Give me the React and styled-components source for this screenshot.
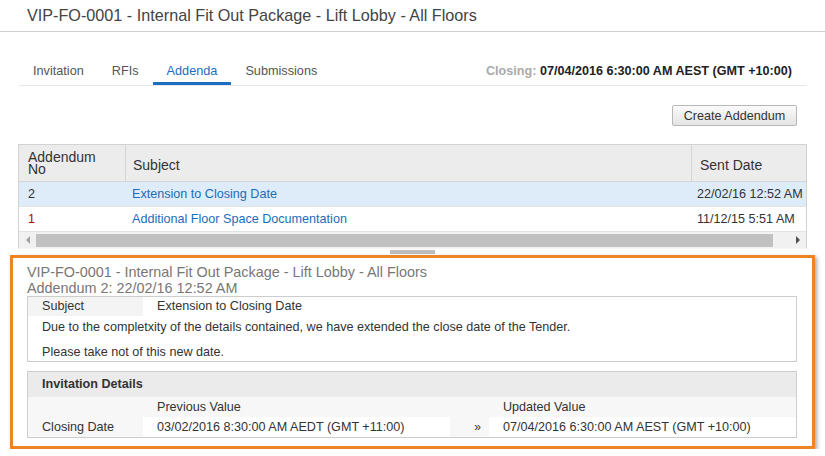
import React from 'react'
import styled, { createGlobalStyle } from 'styled-components'

const GlobalStyle = createGlobalStyle`
  body {
    margin: 0;
    background: #fff;
    font-family: "Liberation Sans", Arial, sans-serif;
    color: #333;
  }
`

const Header = styled.div`
  height: 31px;
  border-bottom: 1px solid #d0d0d0;
  padding: 0 27px;
  display: flex;
  align-items: center;
`

const Title = styled.h1`
  margin: 0;
  font-size: 16.2px;
  font-weight: normal;
  color: #444;
`

const Content = styled.div`
  padding: 0 18px;
`

const TabRow = styled.div`
  margin: 25px 0 0 1px;
  display: flex;
  align-items: flex-end;
  border-bottom: 1px solid #e8e8e8;
`

const Tab = styled.div`
  padding: 6px 14px 3px;
  line-height: 16px;
  font-size: 12.7px;
  color: ${p => (p.$active ? '#1b6ec2' : '#555')};
  border-bottom: 3px solid ${p => (p.$active ? '#1b6ec2' : 'transparent')};
`

const Closing = styled.div`
  margin-left: auto;
  align-self: center;
  margin-right: 15px;
  font-size: 12.6px;
  font-weight: bold;
  color: #222;

  span {
    color: #aaa;
  }
`

const ButtonRow = styled.div`
  display: flex;
  justify-content: flex-end;
  padding-right: 10px;
  margin: 19px 0 18px;
`

const Button = styled.button`
  height: 21px;
  width: 125px;
  padding: 0;
  font-family: inherit;
  font-size: 12.6px;
  color: #333;
  border: 1px solid #b8b8b8;
  border-radius: 2px;
  background: linear-gradient(#fafafa, #e4e4e4);
`

const Table = styled.div`
  border: 1px solid #d2d2d2;
  border-bottom-color: #f4f4f4;
`

const Row = styled.div`
  display: grid;
  grid-template-columns: 106px 1fr 115px;
  height: ${p => (p.$head ? '36px' : '24px')};
  background: ${p => (p.$head ? '#ececec' : p.$selected ? '#deebf8' : '#fff')};
  border-bottom: 1px solid ${p => (p.$head ? '#d5d5d5' : '#e2e2e2')};
  font-size: ${p => (p.$head ? '14px' : '12.6px')};
`

const Cell = styled.div`
  display: flex;
  align-items: center;
  padding-left: ${p => p.$pad || 8}px;
  padding-top: ${p => p.$top || 0}px;
  white-space: nowrap;
  color: ${p => p.$color || '#333'};
  border-left: ${p => (p.$divider ? '1px solid #d4d4d4' : 'none')};
`

const Stack = styled.div`
  line-height: 12px;
`

const Link = styled.span`
  color: #1a6dba;
`

const Scrollbar = styled.div`
  height: 16px;
  background: #f1f1f1;
  display: flex;
  align-items: center;
`

const Arrow = styled.div`
  width: 17px;
  display: flex;
  justify-content: center;

  &::before {
    content: '';
    border-top: 4px solid transparent;
    border-bottom: 4px solid transparent;
    ${p =>
      p.$dir === 'left'
        ? 'border-right: 4px solid #a3a3a3;'
        : 'border-left: 4px solid #505050;'}
  }
`

const Thumb = styled.div`
  flex: 1;
  height: 13px;
  margin-right: 16px;
  background: #c1c1c1;
`

const Splitter = styled.div`
  width: 45px;
  height: 4px;
  margin: 1px auto 1px;
  background: #bdbdbd;
`

const Panel = styled.div`
  margin: 0 -8px;
  border: 3px solid #ef8424;
  box-shadow: 2px 2px 4px rgba(0, 0, 0, 0.35);
  padding: 6px 15px 8px 14px;
`

const PanelTitle = styled.div`
  font-size: 14.4px;
  line-height: 16px;
  color: #777;
`

const Box = styled.div`
  border: 1px solid #cdcdcd;
  margin-top: ${p => p.$gap || 0}px;
  font-size: 12.6px;
`

const SubjectRow = styled.div`
  display: grid;
  grid-template-columns: 115px 1fr;
  height: 19px;
  line-height: 19px;
`

const Label = styled.div`
  padding-left: 14px;
  background: ${p => p.$bg || 'transparent'};
`

const Para = styled.p`
  margin: ${p => p.$top}px 0 0;
  padding: 0 14px ${p => p.$bottom || 0}px;
  line-height: 16px;
`

const BoxHead = styled.div`
  height: 25px;
  line-height: 25px;
  padding-left: 14px;
  background: #ebebeb;
  font-weight: bold;
`

const ChangeGrid = styled.div`
  display: grid;
  grid-template-columns: 115px 307px 39px 1fr;
  grid-auto-rows: 20px;
  background: #f7f7f7;
  line-height: 20px;
`

const Value = styled.div`
  padding-left: 14px;
  background: ${p => (p.$white ? '#fff' : 'transparent')};
`

const Chevron = styled.div`
  text-align: right;
  padding-right: 8px;
  font-size: 12px;
`

const rows = [
  { no: '2', subject: 'Extension to Closing Date', sent: '22/02/16 12:52 AM', selected: true },
  { no: '1', subject: 'Additional Floor Space Documentation', sent: '11/12/15 5:51 AM', red: true },
]

export default function App() {
  return (
    <>
      <GlobalStyle />
      <Header>
        <Title>VIP-FO-0001 - Internal Fit Out Package - Lift Lobby - All Floors</Title>
      </Header>
      <Content>
        <TabRow>
          <Tab>Invitation</Tab>
          <Tab>RFIs</Tab>
          <Tab $active>Addenda</Tab>
          <Tab>Submissions</Tab>
          <Closing>
            <span>Closing:</span> 07/04/2016 6:30:00 AM AEST (GMT +10:00)
          </Closing>
        </TabRow>
        <ButtonRow>
          <Button>Create Addendum</Button>
        </ButtonRow>
        <Table>
          <Row $head>
            <Cell $pad={9}>
              <Stack>
                Addendum
                <br />
                No
              </Stack>
            </Cell>
            <Cell $divider $pad={7} $top={3}>Subject</Cell>
            <Cell $divider $pad={8} $top={3}>Sent Date</Cell>
          </Row>
          {rows.map(r => (
            <Row key={r.no} $selected={r.selected}>
              <Cell $pad={9} $color={r.red ? '#b00000' : '#333'}>{r.no}</Cell>
              <Cell $pad={7}>
                <Link>{r.subject}</Link>
              </Cell>
              <Cell $pad={6}>{r.sent}</Cell>
            </Row>
          ))}
          <Scrollbar>
            <Arrow $dir="left" />
            <Thumb />
            <Arrow $dir="right" />
          </Scrollbar>
        </Table>
        <Splitter />
        <Panel>
          <PanelTitle>VIP-FO-0001 - Internal Fit Out Package - Lift Lobby - All Floors</PanelTitle>
          <PanelTitle>Addendum 2: 22/02/16 12:52 AM</PanelTitle>
          <Box>
            <SubjectRow>
              <Label $bg="#f4f4f4">Subject</Label>
              <Label>Extension to Closing Date</Label>
            </SubjectRow>
            <Para $top={3}>
              Due to the completxity of the details contained, we have extended the close date of the Tender.
            </Para>
            <Para $top={9} $bottom={1}>
              Please take not of this new date.
            </Para>
          </Box>
          <Box $gap={9}>
            <BoxHead>Invitation Details</BoxHead>
            <ChangeGrid>
              <div />
              <Value>Previous Value</Value>
              <div />
              <Value>Updated Value</Value>
              <Value>Closing Date</Value>
              <Value $white>03/02/2016 8:30:00 AM AEDT (GMT +11:00)</Value>
              <Chevron>»</Chevron>
              <Value $white>07/04/2016 6:30:00 AM AEST (GMT +10:00)</Value>
            </ChangeGrid>
          </Box>
        </Panel>
      </Content>
    </>
  )
}
